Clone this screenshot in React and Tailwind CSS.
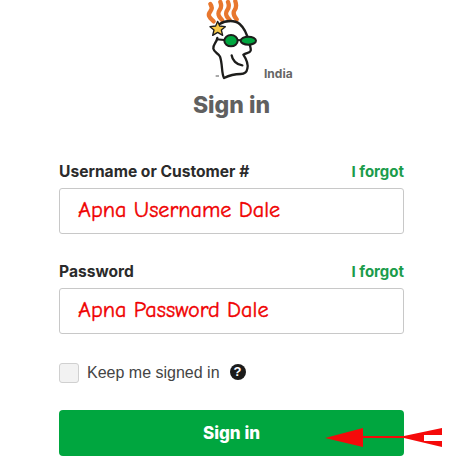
const labelFont = "font-['Inter',sans-serif]";

function Logo() {
  return (
    <svg width="62" height="82" viewBox="75 0 186 246" className="shrink-0" fill="none">
      {/* flames */}
      <g stroke="#e8772e" strokeWidth="13" strokeLinecap="round">
        <path d="M104 64c-16-14-18-20-10-30 6-8 6-14 0-22" />
        <path d="M129 60c-12-12-14-20-7-30 6-8 6-14 2-24" />
        <path d="M152 60c-12-12-14-20-7-30 6-8 6-14 2-24" />
        <path d="M173 58c-10-12-12-20-6-28 6-8 6-14 2-26" />
      </g>
      {/* head */}
      <g stroke="#1d1d1b" strokeWidth="7" strokeLinecap="round" strokeLinejoin="round">
        <path d="M122 72c18-12 46-12 60 0 14 12 22 30 27 52 3 12 8 22 6 28-3 8-12 6-22 12 8 12 16 26 12 42-2 12-8 16-20 16-16 0-30 2-50 12-8-14-4-42-12-64-4-10-18-12-20-24-2-12 10-18 12-32" />
        <path d="M158 166c2 14 14 28 32 30" />
      </g>
      {/* glasses */}
      <ellipse cx="156" cy="122" rx="20" ry="17" fill="#00a63f" stroke="#1d1d1b" strokeWidth="6" />
      <ellipse cx="208" cy="122" rx="23" ry="12" fill="#00a63f" stroke="#1d1d1b" strokeWidth="6" />
      <path d="M112 118l24 2M174 120l12 1" stroke="#1d1d1b" strokeWidth="6" />
      {/* star */}
      <path
        d="M116 64l6 14 17 2-12 10 4 16-15-9-15 9 4-16-12-10 17-2z"
        fill="#f7c948"
        stroke="#1d1d1b"
        strokeWidth="4"
        strokeLinejoin="round"
      />
      <path d="M110 228h10" stroke="#555" strokeWidth="3" />
    </svg>
  );
}

function Field({ label, value }) {
  return (
    <div>
      <div className={`flex items-center justify-between h-[22px] ${labelFont}`}>
        <span className="text-[15.6px] font-bold text-[#2b2b2b]">{label}</span>
        <a className="text-[15px] font-bold text-[#1b9c4b]">I forgot</a>
      </div>
      <div className="mt-[5px] h-[46px] rounded-[3px] border border-[#c8c8c8] bg-white pl-[18px] flex items-center">
        <span className="text-[22.2px] text-[#f00000] [-webkit-text-stroke:0.4px_#f00000] font-['Comic_Sans_MS','Comic_Neue',cursive]">
          {value}
        </span>
      </div>
    </div>
  );
}

export default function App() {
  return (
    <div className="relative w-[471px] h-[467px] overflow-hidden bg-white">
      <div className="ml-[59px] w-[345px]">
        <div className="flex items-end pl-[145px] h-[82px]">
          <Logo />
          <span className={`ml-[-2px] mb-[-1px] text-[12px] font-bold text-[#666] ${labelFont}`}>India</span>
        </div>
        <h1 className={`mt-[7px] text-center text-[23px] leading-[32px] font-extrabold text-[#606060] ${labelFont}`}>
          Sign in
        </h1>
        <div className="mt-[40px]">
          <Field label="Username or Customer #" value="Apna Username Dale" />
        </div>
        <div className="mt-[27px]">
          <Field label="Password" value="Apna Password Dale" />
        </div>
        <div className="mt-[29px] flex items-center h-[20px] font-['Liberation_Sans',sans-serif]">
          <div className="w-[20px] h-[20px] rounded-[3px] border border-[#d0d0d0] bg-[#f2f2f2]" />
          <span className="ml-[8px] text-[16px] text-[#444]">Keep me signed in</span>
          <span className="ml-[10px] mb-[2px] w-[16px] h-[16px] rounded-full bg-[#1b1b1b] text-white text-[13px] font-bold flex items-center justify-center">
            ?
          </span>
        </div>
        <button className={`mt-[27px] w-full h-[46px] pt-[2px] rounded-[4px] bg-[#00a63f] text-white text-[17px] font-extrabold ${labelFont}`}>
          Sign in
        </button>
      </div>
      {/* red arrow drawn over the button */}
      <svg className="absolute left-[320px] top-[420px]" width="130" height="36" viewBox="320 420 130 36">
        <path
          d="M325 438l38-10v8h41l38-8v19l-38-9h-41v9z"
          fill="#f50a0a"
        />
        <path d="M424 435h18v6h-18z" fill="#fff" />
      </svg>
    </div>
  );
}
